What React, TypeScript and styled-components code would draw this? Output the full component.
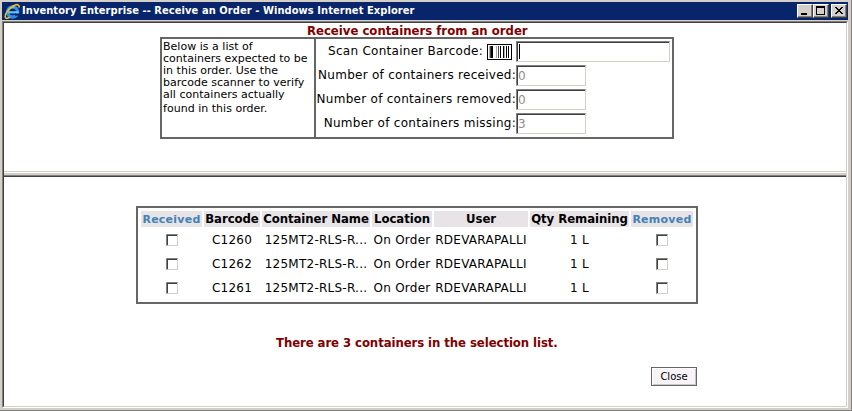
import React from 'react';
import styled, { createGlobalStyle } from 'styled-components';

const WIDE = '"DejaVu Sans", Verdana, sans-serif';
const NARROW = '"DejaVu Sans Condensed", "DejaVu Sans", Tahoma, sans-serif';

const GlobalStyle = createGlobalStyle`
  * { box-sizing: border-box; }
  body { margin: 0; background: #fff; }
`;

const Window = styled.div`
  width: 852px;
  height: 411px;
  padding: 2px 3px 2px 2px;
  display: flex;
  flex-direction: column;
  background: #d4d0c8;
  border-right: 1px solid #808080;
  border-bottom: 1px solid #808080;
`;

const TitleBar = styled.header`
  height: 18px;
  flex: none;
  display: flex;
  align-items: center;
  padding: 0 1px 0 2px;
  background: #08246b;
`;

const TitleText = styled.h1`
  flex: 1;
  margin: 0 0 0 1px;
  font: bold 11px/18px ${NARROW};
  font-stretch: condensed;
  letter-spacing: 0.08px;
  color: #fff;
  white-space: nowrap;
`;

const WindowButton = styled.button<{ $gap?: number }>`
  width: 16px;
  height: 14px;
  margin: 0 0 0 ${p => p.$gap ?? 0}px;
  padding: 0;
  border: 1px solid;
  border-color: #fff #404040 #404040 #fff;
  box-shadow: inset -1px -1px #808080;
  background: #d4d0c8;
  display: flex;
  align-items: center;
  justify-content: center;
`;

const Client = styled.main`
  flex: 1;
  margin-top: 1px;
  display: flex;
  flex-direction: column;
  border: 1px solid;
  border-color: #808080 #fff #fff #808080;
`;

const Inner = styled.div`
  flex: 1;
  display: flex;
  flex-direction: column;
  border: 1px solid;
  border-color: #404040 #d4d0c8 #d4d0c8 #404040;
  background: #fff;
`;

const TopPane = styled.section`
  height: 148px;
  flex: none;
  padding-top: 1px;
`;

const Splitter = styled.div`
  height: 6px;
  flex: none;
  border-top: 1px solid #d4d0c8;
  border-bottom: 1px solid #404040;
  background: linear-gradient(#fff 1px, #d4d0c8 1px 3px, #808080 3px);
`;

const BottomPane = styled.section`
  flex: 1;
  padding-top: 29px;
`;

const Heading = styled.h2`
  margin: 0 0 0 303px;
  height: 13px;
  font: bold 13px/13px ${NARROW};
  font-stretch: condensed;
  color: #800000;
  white-space: nowrap;
`;

const ScanBox = styled.div`
  display: flex;
  width: 514px;
  height: 102px;
  margin-left: 156px;
  border: 2px solid #666;
`;

const Instructions = styled.p`
  width: 154px;
  margin: 0;
  padding-left: 1px;
  border-right: 2px solid #666;
  font: 11px/12px ${WIDE};
  letter-spacing: 0.02px;
  color: #000;
  white-space: nowrap;
  padding-top: 2px;
  span { display: block; }
  span:last-child { margin-top: 2px; }
`;

const Fields = styled.div`
  flex: 1;
  display: flex;
  flex-direction: column;
  gap: 3px;
  padding: 2px 2px 0 0;
`;

const FieldRow = styled.div`
  display: flex;
  height: 21px;
`;

const Label = styled.label`
  width: 200px;
  display: flex;
  align-items: center;
  justify-content: flex-end;
  gap: 4px;
  font: 12px/23px ${WIDE};
  letter-spacing: 0.27px;
  color: #000;
  white-space: nowrap;
`;

const TextInput = styled.input<{ $width: number }>`
  width: ${p => p.$width}px;
  height: 21px;
  padding: 1px 0 0 1px;
  border: 1px solid;
  border-color: #808080 #d4d0c8 #d4d0c8 #808080;
  border-radius: 0;
  box-shadow: inset 1px 1px #404040;
  background: #fff;
  font: 12px/18px ${WIDE};
  color: #000;
  outline: none;
  &:disabled { color: #8c8c8c; }
`;

const ScanInput = styled.div`
  width: 154px;
  height: 21px;
  padding: 2px 0 0 2px;
  border: 1px solid;
  border-color: #808080 #d4d0c8 #d4d0c8 #808080;
  box-shadow: inset 1px 1px #404040;
`;

const Caret = styled.div`
  width: 1px;
  height: 15px;
  background: #000;
`;

const BarcodeSvg = styled.svg`
  margin-right: 4px;
`;

const List = styled.div`
  width: 562px;
  height: 98px;
  margin-left: 132px;
  padding: 3px;
  border: 2px solid #666;
  display: grid;
  grid-template-columns: 61px 56px 108px 60px 94px 99px 62px;
  grid-template-rows: 16px repeat(3, 22px);
  gap: 2px;
`;

const HeadCell = styled.div<{ $link?: boolean }>`
  text-align: center;
  white-space: nowrap;
  background: #e7e3e7;
  font: ${p => (p.$link ? `bold 11px/18px ${WIDE}` : `bold 13px/16px ${NARROW}`)};
  font-stretch: ${p => (p.$link ? 'normal' : 'condensed')};
  letter-spacing: ${p => (p.$link ? 0.25 : -0.05)}px;
  color: ${p => (p.$link ? '#4282b5' : '#000')};
`;

const Cell = styled.div`
  display: flex;
  align-items: center;
  justify-content: center;
  white-space: nowrap;
  font: 12px/22px ${WIDE};
  letter-spacing: 0.25px;
  color: #000;
`;

const Check = styled.input<{ $nudge?: boolean }>`
  appearance: none;
  width: 12px;
  height: 12px;
  margin: 0 0 0 ${p => (p.$nudge ? 1 : 0)}px;
  border: 1px solid;
  border-color: #808080 #d4d0c8 #d4d0c8 #808080;
  box-shadow: inset 1px 1px #404040;
  background: #fff;
`;

const Summary = styled.p`
  margin: 31px 0 0 272px;
  font: bold 13px/16px ${NARROW};
  font-stretch: condensed;
  letter-spacing: -0.07px;
  color: #800000;
  white-space: nowrap;
`;

const CloseButton = styled.button`
  display: block;
  width: 46px;
  height: 19px;
  margin: 16px 0 0 647px;
  padding: 0;
  border: 1px solid #666;
  box-shadow: inset 1px 1px #fff, inset -1px -1px #c6c7c6;
  background: #f7f3f7;
  font: 10px/17px ${WIDE};
  color: #000;
`;

const BrowserIcon = () => (
  <svg width="17" height="17" viewBox="0 0 17 17">
    <circle cx="8.6" cy="9" r="5" fill="none" stroke="#2c8fe0" strokeWidth="3.4" />
    <path d="M4 9.3H15" stroke="#62c3f8" strokeWidth="2.2" />
    <path d="M11 10.6h5v2.1h-5z" fill="#08246b" />
    <path d="M5.2 6.2Q7 3.4 10.5 4" fill="none" stroke="#8bdcff" strokeWidth="1.4" />
    <path d="M15 4.6C15.8 1.2 12.6.8 8.8 3.2C4.2 6 .8 11 1.2 14C1.5 16 3.8 15.6 5.8 14.2" fill="none" stroke="#f3bd28" strokeWidth="1.6" />
  </svg>
);

const BarcodeIcon = () => (
  <BarcodeSvg width="25" height="16" viewBox="0 0 25 16" shapeRendering="crispEdges">
    <rect width="25" height="16" fill="#000" />
    <rect x="1" y="1" width="23" height="14" fill="#fff" />
    <path d="M4 2h2v12H4zM13 2h1v12h-1zM16 2h1v12h-1zM19 2h1v12h-1zM21 2h1v12h-1z" />
    <path d="M2 2h1v12H2zM9 2h1v12H9zM17 2h1v12h-1z" fill="#aaa" />
    <path d="M3 2h1v12H3zM11 2h1v12h-1z" fill="#444" />
  </BarcodeSvg>
);

const counts = [
  { label: 'Number of containers received:', value: '0' },
  { label: 'Number of containers removed:', value: '0' },
  { label: 'Number of containers missing:', value: '3' },
];

const columns = ['Barcode', 'Container Name', 'Location', 'User', 'Qty Remaining'];
const barcodes = ['C1260', 'C1262', 'C1261'];

export default function App() {
  return (
    <>
      <GlobalStyle />
      <Window>
        <TitleBar>
          <BrowserIcon />
          <TitleText>Inventory Enterprise -- Receive an Order - Windows Internet Explorer</TitleText>
          <WindowButton aria-label="Minimize">
            <svg width="14" height="12" shapeRendering="crispEdges"><path d="M3 8h6v2H3z" /></svg>
          </WindowButton>
          <WindowButton aria-label="Maximize">
            <svg width="14" height="12" shapeRendering="crispEdges">
              <path d="M2 1h9v9H2zM3 3v6h7V3z" fillRule="evenodd" />
            </svg>
          </WindowButton>
          <WindowButton aria-label="Close window" $gap={2}>
            <svg width="14" height="12" shapeRendering="crispEdges">
              <path d="M3 2h2v1h1v1h2V3h1V2h2v1h-1v1H9v1H8v1h1v1h1v1h1v1H9V8H8V7H6v1H5v1H3V8h1V7h1V6h1V5H5V4H4V3H3z" />
            </svg>
          </WindowButton>
        </TitleBar>
        <Client>
          <Inner>
            <TopPane>
              <Heading>Receive containers from an order</Heading>
              <ScanBox>
                <Instructions>
                  <span>Below is a list of</span>
                  <span>containers expected to be</span>
                  <span>in this order. Use the</span>
                  <span>barcode scanner to verify</span>
                  <span>all containers actually</span>
                  <span>found in this order.</span>
                </Instructions>
                <Fields>
                  <FieldRow>
                    <Label>
                      Scan Container Barcode:
                      <BarcodeIcon />
                    </Label>
                    <ScanInput role="textbox"><Caret /></ScanInput>
                  </FieldRow>
                  {counts.map(c => (
                    <FieldRow key={c.label}>
                      <Label>{c.label}</Label>
                      <TextInput $width={70} value={c.value} disabled readOnly />
                    </FieldRow>
                  ))}
                </Fields>
              </ScanBox>
            </TopPane>
            <Splitter />
            <BottomPane>
              <List>
                <HeadCell $link>Received</HeadCell>
                {columns.map(c => <HeadCell key={c}>{c}</HeadCell>)}
                <HeadCell $link>Removed</HeadCell>
                {barcodes.map(code => (
                  <React.Fragment key={code}>
                    <Cell><Check type="checkbox" $nudge /></Cell>
                    <Cell>{code}</Cell>
                    <Cell>125MT2-RLS-R...</Cell>
                    <Cell>On Order</Cell>
                    <Cell>RDEVARAPALLI</Cell>
                    <Cell>1 L</Cell>
                    <Cell><Check type="checkbox" /></Cell>
                  </React.Fragment>
                ))}
              </List>
              <Summary>There are 3 containers in the selection list.</Summary>
              <CloseButton>Close</CloseButton>
            </BottomPane>
          </Inner>
        </Client>
      </Window>
    </>
  );
}
